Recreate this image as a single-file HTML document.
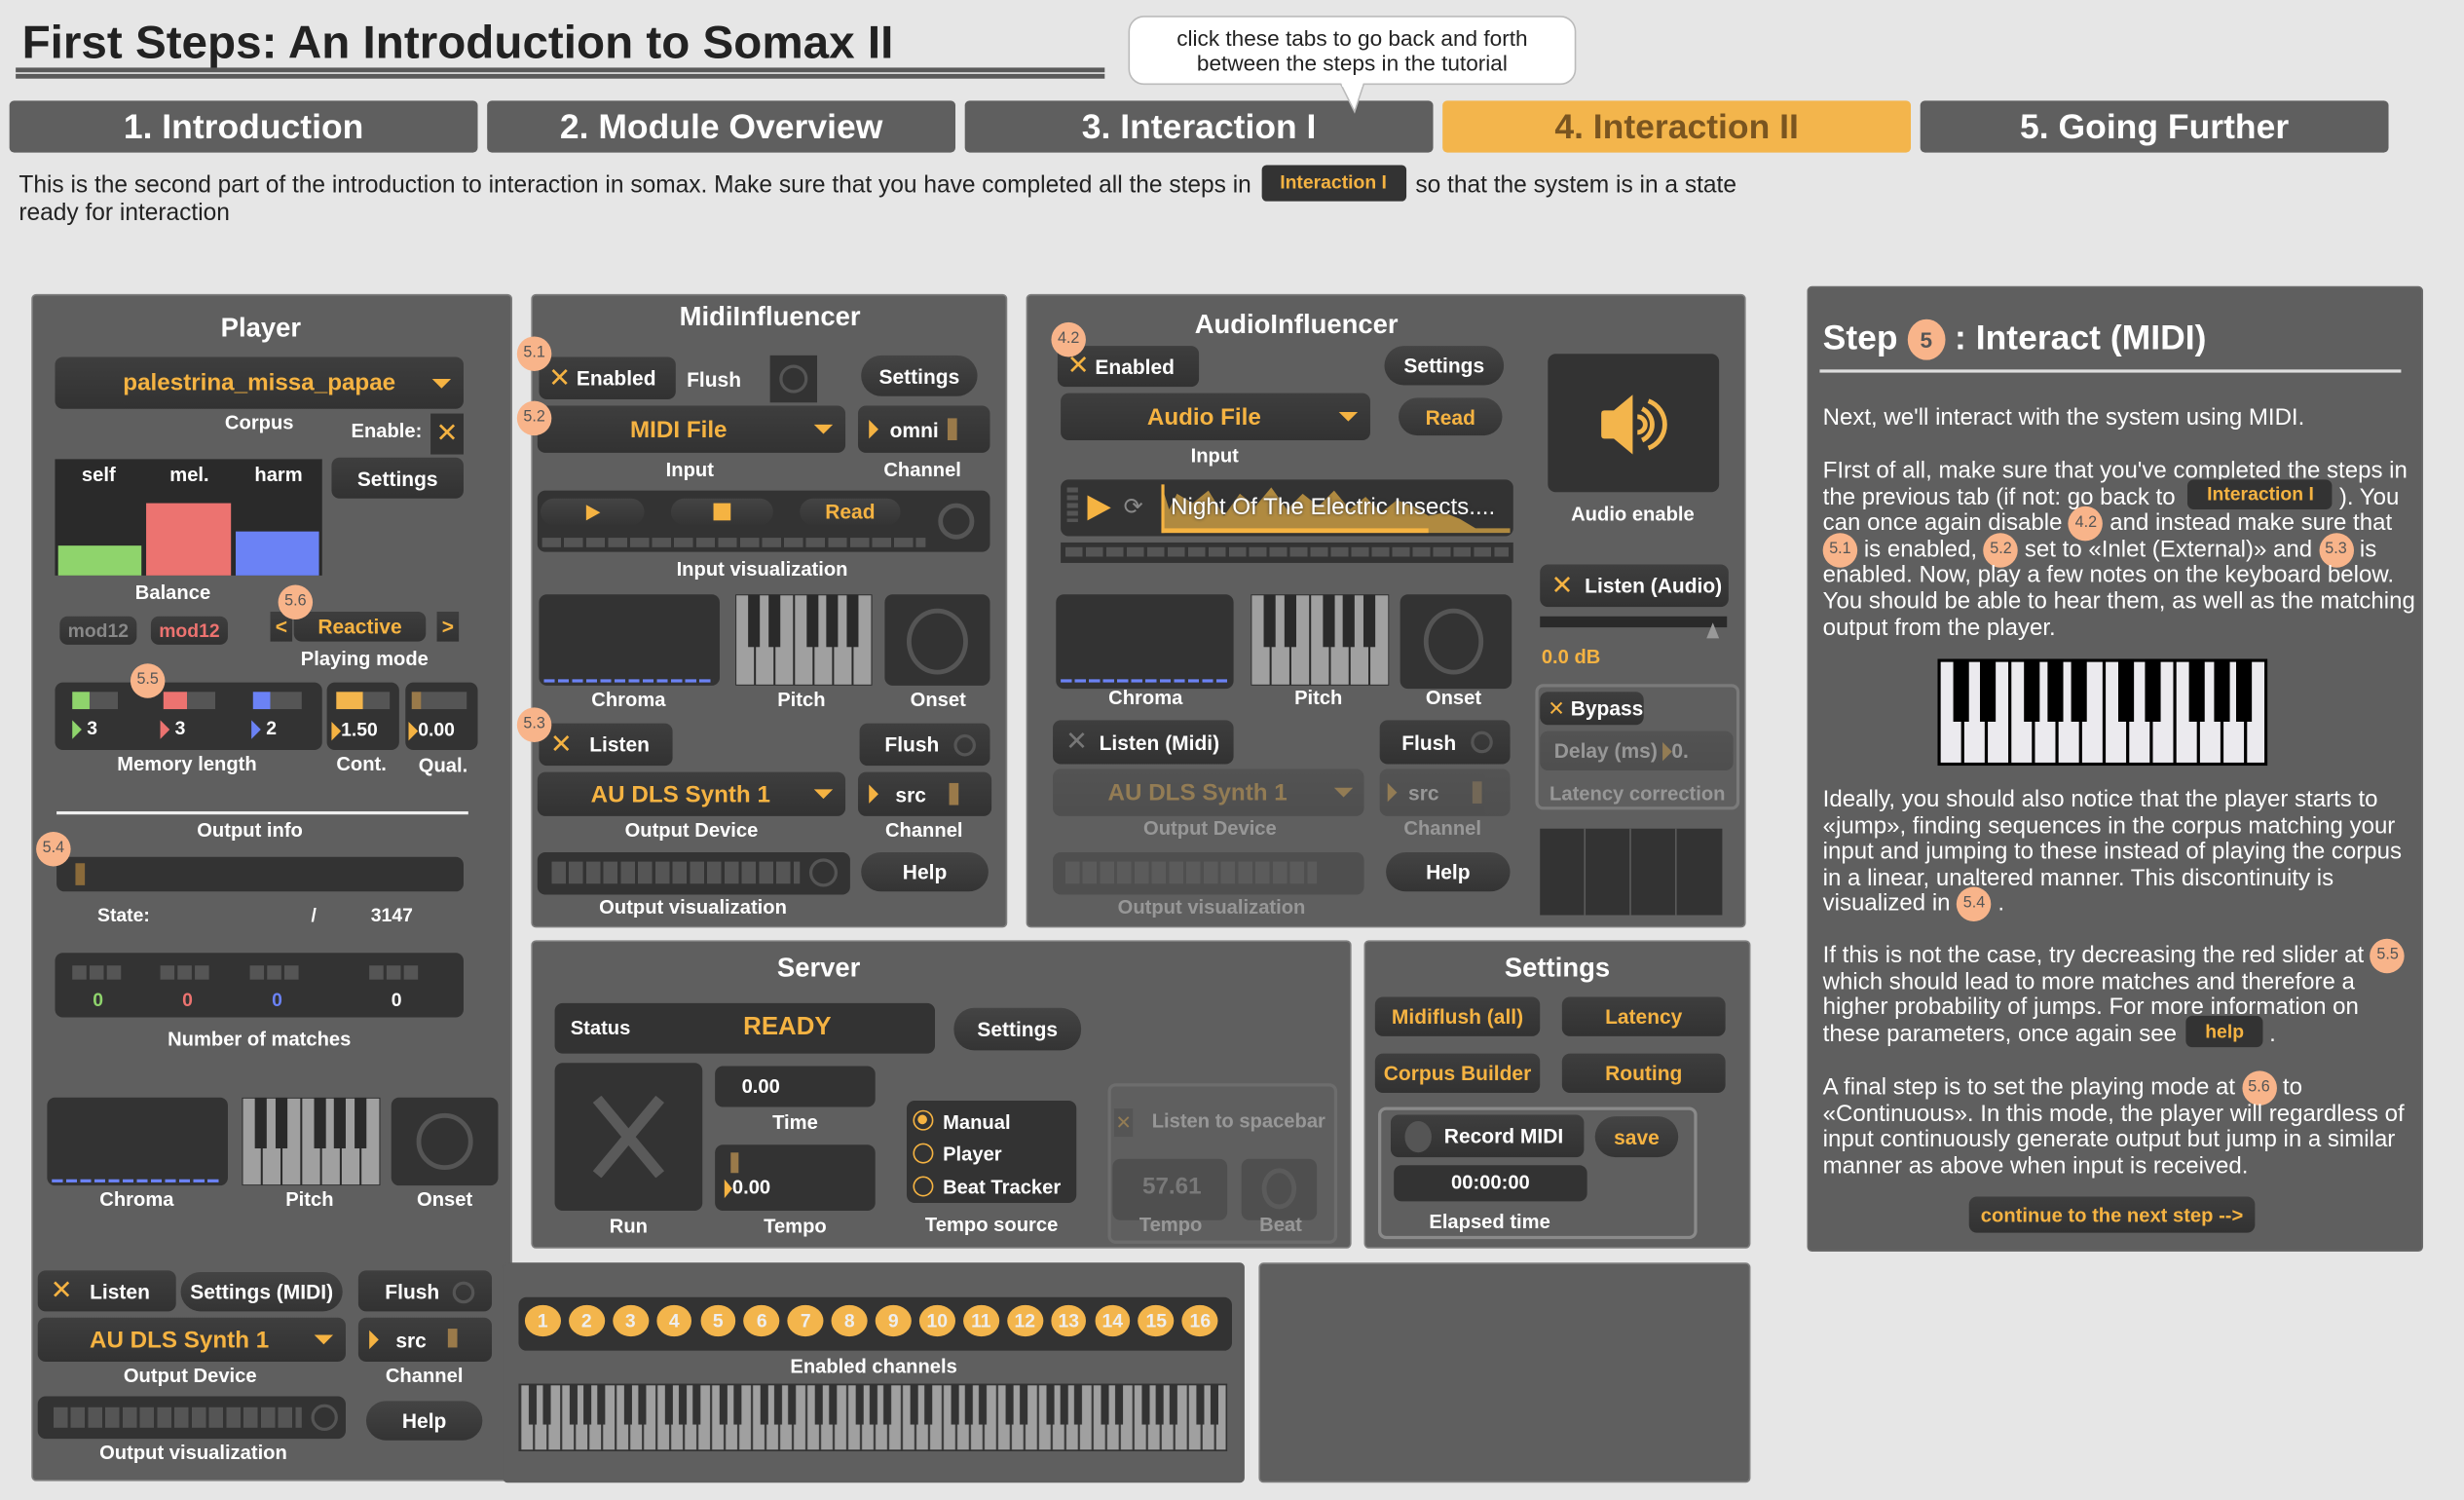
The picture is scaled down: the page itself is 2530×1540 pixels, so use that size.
<!DOCTYPE html>
<html><head><meta charset="utf-8">
<style>
*{margin:0;padding:0;box-sizing:border-box}
html,body{width:2530px;height:1540px;overflow:hidden;background:#e6e6e6}
#c{position:absolute;left:0;top:0;width:1568px;height:954px;transform:scale(1.6135,1.6143);transform-origin:0 0;font-family:"Liberation Sans",Arial,sans-serif}
.a{position:absolute}
.pn{position:absolute;background:#5f5f5f;border:1px solid #7d7d7d;border-radius:3px}
.dk{position:absolute;background:#333;border-radius:5px}
.pl{position:absolute;background:linear-gradient(#444,#343434);border-radius:13px;color:#fff;font-weight:bold;font-size:13px;display:flex;align-items:center;justify-content:center}
.bx{position:absolute;background:linear-gradient(#3e3e3e,#323232);border-radius:5px;color:#fff;font-weight:bold;font-size:13px;display:flex;align-items:center;justify-content:center;white-space:nowrap}
.t{position:absolute;color:#fff;font-weight:bold;font-size:12.5px;white-space:nowrap;transform:translateX(-50%)}
.h{position:absolute;color:#fff;font-weight:bold;font-size:17px;white-space:nowrap;transform:translateX(-50%)}
.o{color:#f5b342}
.bg{position:absolute;background:#f8b48a;border-radius:50%;width:22px;height:22px;font-size:10px;color:#555;text-align:center;line-height:22px;font-weight:normal}
.ib{display:inline-block;background:#f8b48a;border-radius:50%;width:22px;height:22px;font-size:10px;color:#555;text-align:center;line-height:22px;vertical-align:middle;margin:-4px 0}
.x{color:#f5b342;font-weight:normal;font-size:17px}
.tab{position:absolute;top:64px;height:33px;width:298px;background:#5f5f5f;border-radius:3px;color:#fff;font-weight:bold;font-size:22px;display:flex;align-items:center;justify-content:center}
.dis{opacity:.35}
.st{position:absolute;left:1160px;width:380px;color:#fff;font-size:14.9px;line-height:16.6px;white-space:nowrap}
.tri{display:inline-block;width:0;height:0;border-left:6px solid #f5b342;border-top:6px solid transparent;border-bottom:6px solid transparent;vertical-align:middle}
.arr{position:absolute;width:0;height:0;border-top:6px solid #f5b342;border-left:6px solid transparent;border-right:6px solid transparent}
.ring{position:absolute;border:3px solid #555;border-radius:50%}
.cc{width:22.8px;height:20px;border-radius:50%;background:#f3b54c;color:#eee;font-weight:bold;font-size:12px;text-align:center;line-height:20px}
</style></head><body><div id="c">

<div class="a" style="left:14px;top:11px;font-size:29.5px;font-weight:bold;color:#222;white-space:nowrap">First Steps: An Introduction to Somax II</div>
<div class="a" style="left:10px;top:43px;width:693px;height:3px;background:#5a5a5a"></div>
<div class="a" style="left:10px;top:47px;width:693px;height:3px;background:#5a5a5a"></div>
<div class="a" style="left:718px;top:10px;width:285px;height:44px;background:#fff;border:1px solid #bbb;border-radius:10px;color:#222;font-size:14px;text-align:center;line-height:16px;padding-top:5px">click these tabs to go back and forth<br>between the steps in the tutorial</div>

<div class="tab" style="left:6px">1. Introduction</div>
<div class="tab" style="left:310px">2. Module Overview</div>
<div class="tab" style="left:614px">3. Interaction I</div>
<div class="tab" style="left:918px;background:#f3b54c;color:#7a5520">4. Interaction II</div>
<div class="tab" style="left:1222px">5. Going Further</div>
<svg class="a" style="left:852px;top:53px" width="18" height="20"><path d="M1 0 L10 18 L16 0" fill="#fff" stroke="#bbb"/><rect x="2" y="0" width="13" height="2" fill="#fff"/></svg>

<div class="a" style="left:12px;top:109px;font-size:15.2px;color:#222;line-height:16.5px;white-space:nowrap">This is the second part of the introduction to interaction in somax. Make sure that you have completed all the steps in <span style="display:inline-block;background:#333;color:#f5b342;font-weight:bold;font-size:12px;padding:3px 12px;border-radius:3px;vertical-align:middle;margin:-4px 2px 0">Interaction I</span> so that the system is in a state<br>ready for interaction</div>

<!-- PLAYER -->
<div class="pn" style="left:20px;top:187px;width:306px;height:755px"></div>
<div class="h" style="left:166px;top:199px">Player</div>
<div class="bx" style="left:35px;top:227px;width:260px;height:33px;font-size:15px"><span class="o">palestrina_missa_papae</span></div>
<div class="arr" style="left:275px;top:241px"></div>
<div class="t" style="left:165px;top:262px">Corpus</div>
<div class="t" style="left:246px;top:267px">Enable:</div>
<div class="dk" style="left:274px;top:263px;width:21px;height:26px;border-radius:0;text-align:center;line-height:26px"><span class="x">✕</span></div>
<div class="a" style="left:35px;top:292px;width:170px;height:74px;background:#2a2a2a"></div>
<div class="a" style="left:52px;top:295px;color:#fff;font-weight:bold;font-size:12.5px">self</div>
<div class="a" style="left:108px;top:295px;color:#fff;font-weight:bold;font-size:12.5px">mel.</div>
<div class="a" style="left:162px;top:295px;color:#fff;font-weight:bold;font-size:12.5px">harm</div>
<div class="a" style="left:37px;top:347px;width:53px;height:19px;background:#8fd46c"></div>
<div class="a" style="left:93px;top:320px;width:54px;height:46px;background:#ec7370"></div>
<div class="a" style="left:150px;top:338px;width:53px;height:28px;background:#6b82f5"></div>
<div class="bx" style="left:211px;top:291px;width:84px;height:26px">Settings</div>
<div class="t" style="left:110px;top:370px">Balance</div>
<div class="bx" style="left:38px;top:392px;width:49px;height:18px;color:#888;font-size:12px">mod12</div>
<div class="bx" style="left:96px;top:392px;width:49px;height:18px;color:#ec7370;font-size:12px">mod12</div>
<div class="bx" style="left:172px;top:389px;width:14px;height:19px;color:#f5b342;border-radius:0">&lt;</div>
<div class="bx" style="left:187px;top:389px;width:84px;height:19px;color:#f5b342">Reactive</div>
<div class="bx" style="left:278px;top:389px;width:14px;height:19px;color:#f5b342;border-radius:0">&gt;</div>
<div class="bg" style="left:177px;top:372px">5.6</div>
<div class="t" style="left:232px;top:412px">Playing mode</div>
<div class="dk" style="left:35px;top:434px;width:170px;height:43px"></div>
<div class="a" style="left:46px;top:440px;width:11px;height:11px;background:#8fd46c"></div><div class="a" style="left:57px;top:440px;width:18px;height:11px;background:#555"></div>
<div class="a" style="left:104px;top:440px;width:15px;height:11px;background:#ec7370"></div><div class="a" style="left:119px;top:440px;width:18px;height:11px;background:#555"></div>
<div class="a" style="left:161px;top:440px;width:11px;height:11px;background:#6b82f5"></div><div class="a" style="left:172px;top:440px;width:20px;height:11px;background:#555"></div>
<div class="a" style="left:46px;top:456px;color:#fff;font-weight:bold;font-size:12px"><span class="tri" style="border-left-color:#8fd46c"></span> 3</div>
<div class="a" style="left:102px;top:456px;color:#fff;font-weight:bold;font-size:12px"><span class="tri" style="border-left-color:#ec7370"></span> 3</div>
<div class="a" style="left:160px;top:456px;color:#fff;font-weight:bold;font-size:12px"><span class="tri" style="border-left-color:#6b82f5"></span> 2</div>
<div class="bg" style="left:83px;top:422px">5.5</div>
<div class="dk" style="left:208px;top:434px;width:46px;height:43px"></div>
<div class="a" style="left:214px;top:440px;width:17px;height:11px;background:#f3b54c"></div><div class="a" style="left:231px;top:440px;width:17px;height:11px;background:#555"></div>
<div class="a" style="left:211px;top:457px;color:#fff;font-weight:bold;font-size:12px"><span class="tri"></span>1.50</div>
<div class="dk" style="left:258px;top:434px;width:46px;height:43px"></div>
<div class="a" style="left:262px;top:440px;width:6px;height:11px;background:#9a7a4a"></div><div class="a" style="left:268px;top:440px;width:29px;height:11px;background:#555"></div>
<div class="a" style="left:260px;top:457px;color:#fff;font-weight:bold;font-size:12px"><span class="tri"></span>0.00</div>
<div class="t" style="left:119px;top:479px">Memory length</div>
<div class="t" style="left:230px;top:479px">Cont.</div>
<div class="t" style="left:282px;top:480px">Qual.</div>
<div class="a" style="left:36px;top:516px;width:262px;height:2px;background:#eee"></div>
<div class="t" style="left:159px;top:521px">Output info</div>
<div class="dk" style="left:36px;top:545px;width:259px;height:22px"></div>
<div class="a" style="left:48px;top:549px;width:6px;height:14px;background:#8a6a3a"></div>
<div class="bg" style="left:23px;top:529px">5.4</div>
<div class="a" style="left:62px;top:575px;color:#fff;font-weight:bold;font-size:12px">State:</div>
<div class="a" style="left:198px;top:575px;color:#fff;font-weight:bold;font-size:12px">/</div>
<div class="a" style="left:236px;top:575px;color:#fff;font-weight:bold;font-size:12px">3147</div>
<div class="dk" style="left:35px;top:606px;width:260px;height:41px"></div>
<svg class="a" style="left:45px;top:614px" width="240" height="10"><g fill="#555"><rect x="1" width="9" height="9"/><rect x="12" width="9" height="9"/><rect x="23" width="9" height="9"/><rect x="57" width="9" height="9"/><rect x="68" width="9" height="9"/><rect x="79" width="9" height="9"/><rect x="114" width="9" height="9"/><rect x="125" width="9" height="9"/><rect x="136" width="9" height="9"/><rect x="190" width="9" height="9"/><rect x="201" width="9" height="9"/><rect x="212" width="9" height="9"/></g></svg>
<div class="a" style="left:59px;top:629px;color:#8fd46c;font-weight:bold;font-size:12px">0</div>
<div class="a" style="left:116px;top:629px;color:#ec7370;font-weight:bold;font-size:12px">0</div>
<div class="a" style="left:173px;top:629px;color:#6b82f5;font-weight:bold;font-size:12px">0</div>
<div class="a" style="left:249px;top:629px;color:#fff;font-weight:bold;font-size:12px">0</div>
<div class="t" style="left:165px;top:654px">Number of matches</div>
<div class="dk" style="left:30px;top:698px;width:115px;height:56px"></div>
<div class="a" style="left:33px;top:750px;width:108px;height:2px;background:repeating-linear-gradient(90deg,#6b82f5 0 7px,transparent 7px 9px)"></div>
<svg class="a" style="left:154px;top:698px" width="88" height="56" viewBox="0 0 7 4.5" preserveAspectRatio="none"><rect width="7" height="4.5" fill="#2a2a2a"/><g fill="#a0a0a0"><rect x=".05" y=".05" width=".9" height="4.4"/><rect x="1.05" y=".05" width=".9" height="4.4"/><rect x="2.05" y=".05" width=".9" height="4.4"/><rect x="3.05" y=".05" width=".9" height="4.4"/><rect x="4.05" y=".05" width=".9" height="4.4"/><rect x="5.05" y=".05" width=".9" height="4.4"/><rect x="6.05" y=".05" width=".9" height="4.4"/></g><g fill="#2a2a2a"><rect x=".65" width=".6" height="2.6"/><rect x="1.7" width=".6" height="2.6"/><rect x="3.65" width=".6" height="2.6"/><rect x="4.65" width=".6" height="2.6"/><rect x="5.7" width=".6" height="2.6"/></g></svg>
<div class="dk" style="left:249px;top:698px;width:68px;height:56px"></div>
<div class="ring" style="left:265px;top:708px;width:36px;height:36px"></div>
<div class="t" style="left:87px;top:756px">Chroma</div>
<div class="t" style="left:197px;top:756px">Pitch</div>
<div class="t" style="left:283px;top:756px">Onset</div>
<div class="bx" style="left:24px;top:808px;width:88px;height:26px;justify-content:flex-start;padding-left:8px"><span class="x">✕</span>&nbsp;&nbsp;&nbsp;Listen</div>
<div class="pl" style="left:115px;top:809px;width:103px;height:25px">Settings (MIDI)</div>
<div class="bx" style="left:228px;top:808px;width:85px;height:26px;justify-content:flex-start;padding-left:17px">Flush</div>
<div class="ring" style="left:288px;top:815px;width:14px;height:14px;border-width:2px"></div>
<div class="bx" style="left:24px;top:838px;width:196px;height:28px;font-size:15px;justify-content:flex-start;padding-left:33px"><span class="o">AU DLS Synth 1</span></div>
<div class="arr" style="left:200px;top:849px"></div>
<div class="bx" style="left:228px;top:838px;width:85px;height:28px;justify-content:flex-start;padding-left:7px"><span class="tri"></span>&nbsp;&nbsp;&nbsp;src</div>
<div class="a" style="left:285px;top:845px;width:6px;height:12px;background:#9a7a4a"></div>
<div class="t" style="left:121px;top:868px">Output Device</div>
<div class="t" style="left:270px;top:868px">Channel</div>
<div class="dk" style="left:24px;top:888px;width:196px;height:27px"></div>
<div class="a" style="left:34px;top:895px;width:158px;height:13px;background:repeating-linear-gradient(90deg,#555 0 9px,transparent 9px 11px)"></div>
<div class="ring" style="left:198px;top:893px;width:17px;height:17px;border-width:2px"></div>
<div class="pl" style="left:233px;top:891px;width:74px;height:25px">Help</div>
<div class="t" style="left:123px;top:917px">Output visualization</div>

<!-- MIDI INFLUENCER -->
<div class="pn" style="left:338px;top:187px;width:303px;height:403px"></div>
<div class="h" style="left:490px;top:192px">MidiInfluencer</div>
<div class="bx" style="left:343px;top:227px;width:87px;height:27px;justify-content:flex-start;padding-left:6px"><span class="x">✕</span>&nbsp;Enabled</div>
<div class="bg" style="left:329px;top:214px">5.1</div>
<div class="a" style="left:437px;top:234px;color:#fff;font-weight:bold;font-size:13px">Flush</div>
<div class="a" style="left:490px;top:226px;width:30px;height:30px;background:#333"></div>
<div class="ring" style="left:496px;top:232px;width:18px;height:18px;border-width:2px"></div>
<div class="pl" style="left:548px;top:226px;width:74px;height:26px">Settings</div>
<div class="bx" style="left:342px;top:258px;width:196px;height:30px;font-size:15px;justify-content:flex-start;padding-left:59px"><span class="o">MIDI File</span></div>
<div class="arr" style="left:518px;top:270px"></div>
<div class="bg" style="left:329px;top:255px">5.2</div>
<div class="bx" style="left:546px;top:258px;width:84px;height:30px;justify-content:flex-start;padding-left:7px"><span class="tri"></span>&nbsp;&nbsp;omni</div>
<div class="a" style="left:603px;top:266px;width:6px;height:14px;background:#9a7a4a"></div>
<div class="t" style="left:439px;top:292px">Input</div>
<div class="t" style="left:587px;top:292px">Channel</div>
<div class="dk" style="left:342px;top:312px;width:288px;height:39px"></div>
<div class="pl" style="left:344px;top:317px;width:66px;height:17px"><span class="tri" style="border-width:5px 0 5px 9px"></span></div>
<div class="pl" style="left:427px;top:317px;width:65px;height:17px"><span style="display:inline-block;width:11px;height:11px;background:#f5b342"></span></div>
<div class="pl" style="left:509px;top:317px;width:64px;height:17px;color:#f5b342">Read</div>
<div class="ring" style="left:597px;top:320px;width:23px;height:23px"></div>
<div class="a" style="left:345px;top:342px;width:244px;height:6px;background:repeating-linear-gradient(90deg,#555 0 12px,transparent 12px 14px)"></div>
<div class="t" style="left:485px;top:355px">Input visualization</div>
<div class="dk" style="left:343px;top:378px;width:115px;height:58px"></div>
<div class="a" style="left:346px;top:432px;width:108px;height:2px;background:repeating-linear-gradient(90deg,#6b82f5 0 7px,transparent 7px 9px)"></div>
<svg class="a" style="left:468px;top:378px" width="87" height="58" viewBox="0 0 7 4.5" preserveAspectRatio="none"><rect width="7" height="4.5" fill="#2a2a2a"/><g fill="#a0a0a0"><rect x=".05" y=".05" width=".9" height="4.4"/><rect x="1.05" y=".05" width=".9" height="4.4"/><rect x="2.05" y=".05" width=".9" height="4.4"/><rect x="3.05" y=".05" width=".9" height="4.4"/><rect x="4.05" y=".05" width=".9" height="4.4"/><rect x="5.05" y=".05" width=".9" height="4.4"/><rect x="6.05" y=".05" width=".9" height="4.4"/></g><g fill="#2a2a2a"><rect x=".65" width=".6" height="2.6"/><rect x="1.7" width=".6" height="2.6"/><rect x="3.65" width=".6" height="2.6"/><rect x="4.65" width=".6" height="2.6"/><rect x="5.7" width=".6" height="2.6"/></g></svg>
<div class="dk" style="left:563px;top:378px;width:67px;height:58px"></div>
<div class="ring" style="left:577px;top:387px;width:39px;height:42px"></div>
<div class="t" style="left:400px;top:438px">Chroma</div>
<div class="t" style="left:510px;top:438px">Pitch</div>
<div class="t" style="left:597px;top:438px">Onset</div>
<div class="bx" style="left:343px;top:460px;width:85px;height:27px;justify-content:flex-start;padding-left:7px"><span class="x">✕</span>&nbsp;&nbsp;&nbsp;Listen</div>
<div class="bg" style="left:329px;top:450px">5.3</div>
<div class="bx" style="left:547px;top:460px;width:83px;height:27px;justify-content:flex-start;padding-left:16px">Flush</div>
<div class="ring" style="left:607px;top:467px;width:14px;height:14px;border-width:2px"></div>
<div class="bx" style="left:342px;top:491px;width:196px;height:28px;font-size:15px;justify-content:flex-start;padding-left:34px"><span class="o">AU DLS Synth 1</span></div>
<div class="arr" style="left:518px;top:502px"></div>
<div class="bx" style="left:546px;top:491px;width:85px;height:28px;justify-content:flex-start;padding-left:7px"><span class="tri"></span>&nbsp;&nbsp;&nbsp;src</div>
<div class="a" style="left:604px;top:498px;width:6px;height:14px;background:#9a7a4a"></div>
<div class="t" style="left:440px;top:521px">Output Device</div>
<div class="t" style="left:588px;top:521px">Channel</div>
<div class="dk" style="left:342px;top:542px;width:199px;height:27px"></div>
<div class="a" style="left:351px;top:548px;width:158px;height:14px;background:repeating-linear-gradient(90deg,#555 0 9px,transparent 9px 11px)"></div>
<div class="ring" style="left:515px;top:546px;width:18px;height:18px;border-width:2px"></div>
<div class="pl" style="left:548px;top:542px;width:81px;height:25px">Help</div>
<div class="t" style="left:441px;top:570px">Output visualization</div>

<!-- AUDIO INFLUENCER -->
<div class="pn" style="left:653px;top:187px;width:458px;height:403px"></div>
<div class="h" style="left:825px;top:197px">AudioInfluencer</div>
<div class="bx" style="left:673px;top:220px;width:90px;height:26px;justify-content:flex-start;padding-left:6px"><span class="x">✕</span>&nbsp;Enabled</div>
<div class="bg" style="left:669px;top:205px">4.2</div>
<div class="pl" style="left:881px;top:220px;width:76px;height:25px">Settings</div>
<div class="bx" style="left:675px;top:250px;width:197px;height:30px;font-size:15px;justify-content:flex-start;padding-left:55px"><span class="o">Audio File</span></div>
<div class="arr" style="left:852px;top:262px"></div>
<div class="pl" style="left:890px;top:253px;width:66px;height:24px;color:#f5b342">Read</div>
<div class="t" style="left:773px;top:283px">Input</div>
<div class="dk" style="left:675px;top:305px;width:288px;height:36px"></div>
<div class="a" style="left:679px;top:310px;width:7px;height:22px;background:repeating-linear-gradient(#555 0 3px,transparent 3px 5px)"></div>
<div class="a" style="left:692px;top:315px;width:0;height:0;border-left:15px solid #f5b342;border-top:8px solid transparent;border-bottom:8px solid transparent"></div>
<div class="a" style="left:715px;top:313px;color:#888;font-size:15px">⟳</div>
<svg class="a" style="left:739px;top:308px" width="222" height="31"><path d="M0 0 L0 31 L222 31 L222 28 L200 28 L190 22 L180 18 L170 20 L160 14 L150 10 L140 18 L130 8 L120 16 L110 4 L100 14 L90 6 L80 16 L70 2 L60 14 L50 6 L40 20 L30 4 L20 12 L10 6 L5 16 Z" fill="#b08a40"/><rect x="0" y="28" width="170" height="3" fill="#f5b342"/><rect x="0" y="0" width="2" height="31" fill="#f5b342"/></svg>
<div class="a" style="left:745px;top:314px;color:#fff;font-size:15px;white-space:nowrap;text-shadow:0 0 2px #333">Night Of The Electric Insects....</div>
<div class="a" style="left:675px;top:345px;width:288px;height:13px;background:#333"></div>
<div class="a" style="left:678px;top:348px;width:282px;height:6px;background:repeating-linear-gradient(90deg,#555 0 11px,transparent 11px 13px)"></div>
<div class="dk" style="left:985px;top:225px;width:109px;height:88px"></div>
<svg class="a" style="left:1017px;top:249px" width="46" height="42" viewBox="0 0 46 42"><path d="M2 14 Q2 12 4 12 L10 12 L22 2 L22 40 L10 30 L4 30 Q2 30 2 28 Z" fill="#f3b54c"/><path d="M25 16 A5 5 0 0 1 25 26" stroke="#f3b54c" stroke-width="3" fill="none"/><path d="M28 11 A11 11 0 0 1 28 31" stroke="#f3b54c" stroke-width="3" fill="none"/><path d="M32 6 A16 16 0 0 1 32 36" stroke="#f3b54c" stroke-width="3" fill="none"/></svg>
<div class="t" style="left:1039px;top:320px">Audio enable</div>
<div class="bx" style="left:980px;top:359px;width:120px;height:27px;justify-content:flex-start;padding-left:7px"><span class="x">✕</span>&nbsp;&nbsp;Listen (Audio)</div>
<div class="a" style="left:980px;top:392px;width:119px;height:7px;background:#2a2a2a"></div>
<div class="a" style="left:1086px;top:396px;width:0;height:0;border-bottom:10px solid #999;border-left:4px solid transparent;border-right:4px solid transparent"></div>
<div class="a" style="left:981px;top:411px;color:#f5b342;font-weight:bold;font-size:12.5px">0.0 dB</div>
<div class="dk" style="left:672px;top:378px;width:113px;height:60px"></div>
<div class="a" style="left:675px;top:432px;width:106px;height:2px;background:repeating-linear-gradient(90deg,#6b82f5 0 7px,transparent 7px 9px)"></div>
<svg class="a" style="left:796px;top:378px" width="88" height="58" viewBox="0 0 7 4.5" preserveAspectRatio="none"><rect width="7" height="4.5" fill="#2a2a2a"/><g fill="#a0a0a0"><rect x=".05" y=".05" width=".9" height="4.4"/><rect x="1.05" y=".05" width=".9" height="4.4"/><rect x="2.05" y=".05" width=".9" height="4.4"/><rect x="3.05" y=".05" width=".9" height="4.4"/><rect x="4.05" y=".05" width=".9" height="4.4"/><rect x="5.05" y=".05" width=".9" height="4.4"/><rect x="6.05" y=".05" width=".9" height="4.4"/></g><g fill="#2a2a2a"><rect x=".65" width=".6" height="2.6"/><rect x="1.7" width=".6" height="2.6"/><rect x="3.65" width=".6" height="2.6"/><rect x="4.65" width=".6" height="2.6"/><rect x="5.7" width=".6" height="2.6"/></g></svg>
<div class="dk" style="left:891px;top:378px;width:71px;height:60px"></div>
<div class="ring" style="left:906px;top:387px;width:38px;height:42px"></div>
<div class="t" style="left:729px;top:437px">Chroma</div>
<div class="t" style="left:839px;top:437px">Pitch</div>
<div class="t" style="left:925px;top:437px">Onset</div>
<div class="bx" style="left:670px;top:458px;width:115px;height:28px;justify-content:flex-start;padding-left:8px"><span class="x" style="color:#777">✕</span>&nbsp;&nbsp;Listen (Midi)</div>
<div class="bx" style="left:878px;top:458px;width:83px;height:28px;justify-content:flex-start;padding-left:14px">Flush</div>
<div class="ring" style="left:936px;top:465px;width:14px;height:14px;border-width:2px"></div>
<div class="dis">
<div class="bx" style="left:670px;top:489px;width:198px;height:30px;font-size:15px;justify-content:flex-start;padding-left:35px"><span class="o">AU DLS Synth 1</span></div>
<div class="arr" style="left:849px;top:501px"></div>
<div class="bx" style="left:878px;top:489px;width:83px;height:30px;justify-content:flex-start;padding-left:5px"><span class="tri"></span>&nbsp;&nbsp;src</div>
<div class="a" style="left:937px;top:497px;width:6px;height:14px;background:#9a7a4a"></div>
<div class="t" style="left:770px;top:520px">Output Device</div>
<div class="t" style="left:918px;top:520px">Channel</div>
<div class="dk" style="left:670px;top:542px;width:198px;height:27px"></div>
<div class="a" style="left:678px;top:548px;width:160px;height:14px;background:repeating-linear-gradient(90deg,#555 0 9px,transparent 9px 11px)"></div>
<div class="t" style="left:771px;top:570px">Output visualization</div>
</div>
<div class="pl" style="left:882px;top:542px;width:79px;height:25px">Help</div>
<div class="a" style="left:977px;top:435px;width:130px;height:80px;border:2px solid #7a7a7a;border-radius:5px"></div>
<div class="bx" style="left:980px;top:440px;width:66px;height:21px;justify-content:flex-start;padding-left:5px"><span class="x" style="font-size:13px">✕</span>&nbsp;Bypass</div>
<div class="dis">
<div class="bx" style="left:980px;top:465px;width:123px;height:25px;justify-content:flex-start;padding-left:9px">Delay (ms) <span class="tri" style="margin-left:3px"></span>0.</div>
<div class="t" style="left:1042px;top:498px">Latency correction</div>
</div>
<div class="a" style="left:980px;top:527px;width:116px;height:55px;background:#333"></div>
<div class="a" style="left:1008px;top:527px;width:1px;height:55px;background:#5a5a5a"></div>
<div class="a" style="left:1037px;top:527px;width:1px;height:55px;background:#5a5a5a"></div>
<div class="a" style="left:1066px;top:527px;width:1px;height:55px;background:#5a5a5a"></div>

<!-- SERVER -->
<div class="pn" style="left:338px;top:598px;width:522px;height:196px"></div>
<div class="h" style="left:521px;top:606px">Server</div>
<div class="dk" style="left:353px;top:638px;width:242px;height:32px"></div>
<div class="a" style="left:363px;top:647px;color:#fff;font-weight:bold;font-size:12.5px">Status</div>
<div class="a" style="left:473px;top:645px;color:#f5b342;font-weight:bold;font-size:16px">READY</div>
<div class="pl" style="left:607px;top:641px;width:81px;height:27px">Settings</div>
<div class="dk" style="left:353px;top:676px;width:94px;height:94px"></div>
<svg class="a" style="left:376px;top:697px" width="48" height="52"><path d="M4 2 L44 50 M44 2 L4 50" stroke="#5a5a5a" stroke-width="7"/></svg>
<div class="t" style="left:400px;top:773px">Run</div>
<div class="dk" style="left:455px;top:678px;width:102px;height:26px"></div>
<div class="a" style="left:472px;top:684px;color:#fff;font-weight:bold;font-size:12.5px">0.00</div>
<div class="t" style="left:506px;top:707px">Time</div>
<div class="dk" style="left:455px;top:728px;width:102px;height:42px"></div>
<div class="a" style="left:465px;top:733px;width:5px;height:13px;background:#9a7a4a"></div>
<div class="a" style="left:461px;top:748px;color:#fff;font-weight:bold;font-size:12.5px"><span class="tri" style="border-width:6px 0 6px 5px"></span>0.00</div>
<div class="t" style="left:506px;top:773px">Tempo</div>
<div class="dk" style="left:577px;top:700px;width:108px;height:65px"></div>
<div class="a" style="left:581px;top:706px;width:13px;height:13px;border:1.5px solid #f5b342;border-radius:50%"><div style="margin:2px;width:6px;height:6px;border-radius:50%;background:#f5b342"></div></div>
<div class="a" style="left:581px;top:727px;width:13px;height:13px;border:1.5px solid #f5b342;border-radius:50%"></div>
<div class="a" style="left:581px;top:748px;width:13px;height:13px;border:1.5px solid #f5b342;border-radius:50%"></div>
<div class="a" style="left:600px;top:707px;color:#fff;font-weight:bold;font-size:12.5px">Manual</div>
<div class="a" style="left:600px;top:727px;color:#fff;font-weight:bold;font-size:12.5px">Player</div>
<div class="a" style="left:600px;top:748px;color:#fff;font-weight:bold;font-size:12.5px">Beat Tracker</div>
<div class="t" style="left:631px;top:772px">Tempo source</div>
<div class="dis">
<div class="a" style="left:705px;top:689px;width:146px;height:102px;border:2px solid #888;border-radius:5px"></div>
<div class="a" style="left:709px;top:705px;width:12px;height:18px;background:#444;color:#f5b342;font-size:12px;text-align:center;line-height:18px">✕</div>
<div class="a" style="left:733px;top:706px;color:#fff;font-weight:bold;font-size:12.5px">Listen to spacebar</div>
<div class="dk" style="left:708px;top:737px;width:73px;height:39px"></div>
<div class="a" style="left:727px;top:746px;color:#aaa;font-weight:bold;font-size:15px">57.61</div>
<div class="dk" style="left:790px;top:737px;width:48px;height:39px"></div>
<div class="ring" style="left:803px;top:743px;width:22px;height:26px"></div>
<div class="t" style="left:745px;top:772px">Tempo</div>
<div class="t" style="left:815px;top:772px">Beat</div>
</div>

<!-- SETTINGS -->
<div class="pn" style="left:868px;top:598px;width:246px;height:196px"></div>
<div class="h" style="left:991px;top:606px">Settings</div>
<div class="bx" style="left:875px;top:634px;width:105px;height:25px;color:#f5b342">Midiflush (all)</div>
<div class="bx" style="left:994px;top:634px;width:104px;height:25px;color:#f5b342">Latency</div>
<div class="bx" style="left:875px;top:670px;width:105px;height:25px;color:#f5b342">Corpus Builder</div>
<div class="bx" style="left:994px;top:670px;width:104px;height:25px;color:#f5b342">Routing</div>
<div class="a" style="left:877px;top:704px;width:203px;height:84px;border:2px solid #8a8a8a;border-radius:5px"></div>
<div class="bx" style="left:885px;top:709px;width:123px;height:27px;justify-content:flex-start;padding-left:34px">Record MIDI</div>
<div class="a" style="left:894px;top:713px;width:17px;height:20px;border-radius:50%;background:#555"></div>
<div class="pl" style="left:1015px;top:710px;width:53px;height:26px;color:#f5b342">save</div>
<div class="dk" style="left:887px;top:741px;width:123px;height:23px;color:#fff;font-weight:bold;font-size:12.5px;text-align:center;line-height:23px">00:00:00</div>
<div class="t" style="left:948px;top:770px">Elapsed time</div>

<!-- BOTTOM -->
<div class="pn" style="left:320px;top:803px;width:472px;height:140px;border-color:#5f5f5f"></div>
<div class="dk" style="left:330px;top:825px;width:454px;height:34px"></div>
<div class="a" style="left:334px;top:830px;display:flex;gap:5.1px">
<div class="cc">1</div><div class="cc">2</div><div class="cc">3</div><div class="cc">4</div><div class="cc">5</div><div class="cc">6</div><div class="cc">7</div><div class="cc">8</div><div class="cc">9</div><div class="cc">10</div><div class="cc">11</div><div class="cc">12</div><div class="cc">13</div><div class="cc">14</div><div class="cc">15</div><div class="cc">16</div>
</div>
<div class="t" style="left:556px;top:862px">Enabled channels</div>
<svg class="a" style="left:330px;top:880px" width="451" height="43">
<defs><pattern id="kb" width="60.69" height="43" patternUnits="userSpaceOnUse" x="1">
<rect width="60.69" height="43" fill="#3a3a3a"/>
<g fill="#a0a0a0"><rect x="0.8" y="1" width="7.3" height="41"/><rect x="9.47" y="1" width="7.3" height="41"/><rect x="18.14" y="1" width="7.3" height="41"/><rect x="26.81" y="1" width="7.3" height="41"/><rect x="35.48" y="1" width="7.3" height="41"/><rect x="44.15" y="1" width="7.3" height="41"/><rect x="52.82" y="1" width="7.3" height="41"/></g>
<g fill="#333"><rect x="5.5" y="0" width="5" height="26"/><rect x="14.5" y="0" width="5" height="26"/><rect x="31.5" y="0" width="5" height="26"/><rect x="40.3" y="0" width="5" height="26"/><rect x="49.1" y="0" width="5" height="26"/></g>
</pattern></defs>
<rect width="451" height="43" fill="url(#kb)" stroke="#333" stroke-width="2"/></svg>
<div class="pn" style="left:801px;top:803px;width:313px;height:140px"></div>

<!-- STEP PANEL -->
<div class="pn" style="left:1150px;top:182px;width:392px;height:614px;border-color:#6a6a6a"></div>
<div class="a" style="left:1160px;top:202px;color:#fff;font-weight:bold;font-size:22px;white-space:nowrap">Step <span class="ib" style="width:24px;height:26px;line-height:26px;font-size:14px;margin:-6px 0">5</span> : Interact (MIDI)</div>
<div class="a" style="left:1158px;top:235px;width:370px;height:2px;background:#ddd"></div>
<div class="st" style="top:258px">Next, we'll interact with the system using MIDI.</div>
<div class="st" style="top:292px">FIrst of all, make sure that you've completed the steps in<br>the previous tab (if not: go back to <span style="display:inline-block;background:#333;color:#f5b342;font-weight:bold;font-size:12px;padding:1px 12px;border-radius:4px;vertical-align:middle;margin:-4px 0 0 4px">Interaction I</span> ). You<br>can once again disable <span class="ib">4.2</span> and instead make sure that<br><span class="ib">5.1</span> is enabled, <span class="ib">5.2</span> set to «Inlet (External)» and <span class="ib">5.3</span> is<br>enabled. Now, play a few notes on the keyboard below.<br>You should be able to hear them, as well as the matching<br>output from the player.</div>
<svg class="a" style="left:1233px;top:419px" width="210" height="68">
<rect x="0" y="0" width="210" height="68" fill="#000"/>
<g fill="#ebeaee"><rect x="2" y="2" width="13" height="64"/><rect x="17" y="2" width="13" height="64"/><rect x="32" y="2" width="13" height="64"/><rect x="47" y="2" width="13" height="64"/><rect x="62" y="2" width="13" height="64"/><rect x="77" y="2" width="13" height="64"/><rect x="92" y="2" width="13" height="64"/><rect x="107" y="2" width="13" height="64"/><rect x="122" y="2" width="13" height="64"/><rect x="137" y="2" width="13" height="64"/><rect x="152" y="2" width="13" height="64"/><rect x="167" y="2" width="13" height="64"/><rect x="182" y="2" width="13" height="64"/><rect x="197" y="2" width="11" height="64"/></g>
<g fill="#000"><rect x="10" y="0" width="10" height="40"/><rect x="27" y="0" width="10" height="40"/><rect x="55" y="0" width="10" height="40"/><rect x="70" y="0" width="10" height="40"/><rect x="85" y="0" width="10" height="40"/><rect x="115" y="0" width="10" height="40"/><rect x="132" y="0" width="10" height="40"/><rect x="160" y="0" width="10" height="40"/><rect x="176" y="0" width="10" height="40"/><rect x="190" y="0" width="10" height="40"/></g></svg>
<div class="st" style="top:501px">Ideally, you should also notice that the player starts to<br>«jump», finding sequences in the corpus matching your<br>input and jumping to these instead of playing the corpus<br>in a linear, unaltered manner. This discontinuity is<br>visualized in <span class="ib">5.4</span> .</div>
<div class="st" style="top:600px">If this is not the case, try decreasing the red slider at <span class="ib">5.5</span><br>which should lead to more matches and therefore a<br>higher probability of jumps. For more information on<br>these parameters, once again see <span style="display:inline-block;background:#333;color:#f5b342;font-weight:bold;font-size:12px;padding:2px 12px;border-radius:4px;vertical-align:middle;margin:-4px 0 0 2px">help</span> .</div>
<div class="st" style="top:684px">A final step is to set the playing mode at <span class="ib">5.6</span> to<br>«Continuous». In this mode, the player will regardless of<br>input continuously generate output but jump in a similar<br>manner as above when input is received.</div>
<div class="bx" style="left:1253px;top:761px;width:182px;height:23px;color:#f5b342;font-size:12.5px">continue to the next step --&gt;</div>

</div></body></html>
